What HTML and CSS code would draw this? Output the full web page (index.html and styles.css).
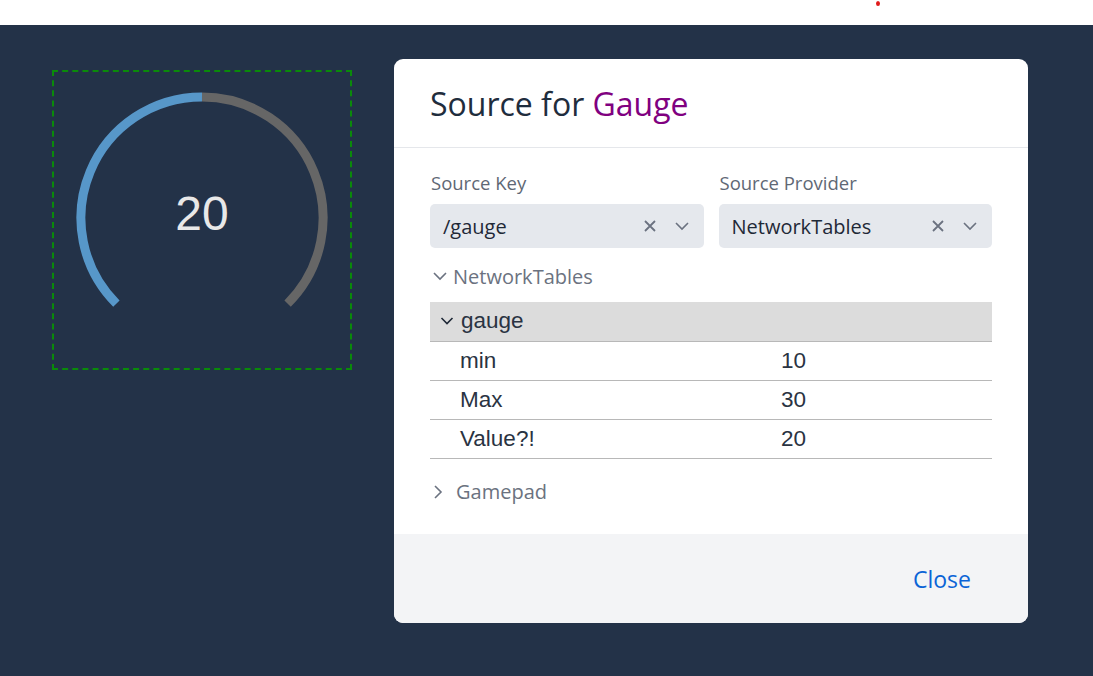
FILE: index.html
```html
<!DOCTYPE html>
<html>
<head>
<meta charset="utf-8">
<link rel="stylesheet" href="styles.css">
</head>
<body>
<div class="topbar"><span class="dot"></span></div>
<main class="canvas">
  <div class="widget">
    <svg class="gauge" width="300" height="300" viewBox="0 0 300 300">
      <path d="M 64.4 233.6 A 121 121 0 0 1 150 27" fill="none" stroke="#5797c9" stroke-width="9"/>
      <path d="M 150 27 A 121 121 0 0 1 235.6 233.6" fill="none" stroke="#666666" stroke-width="9"/>
    </svg>
    <div class="gauge-value">20</div>
  </div>
  <section class="modal">
    <header class="modal-head">
      <h1>Source for <span class="accent">Gauge</span></h1>
    </header>
    <div class="modal-body">
      <div class="fields">
        <div class="field">
          <label>Source Key</label>
          <div class="select">
            <span class="sel-text">/gauge</span>
            <svg class="ico-x" width="14" height="14" viewBox="0 0 14 14"><path d="M2 2L12 12M12 2L2 12" stroke="#6b7280" stroke-width="1.8" fill="none"/></svg>
            <svg class="ico-chev" width="16" height="10" viewBox="0 0 16 10"><path d="M2 2L8 8L14 2" stroke="#6b7280" stroke-width="1.6" fill="none"/></svg>
          </div>
        </div>
        <div class="field">
          <label>Source Provider</label>
          <div class="select">
            <span class="sel-text">NetworkTables</span>
            <svg class="ico-x" width="14" height="14" viewBox="0 0 14 14"><path d="M2 2L12 12M12 2L2 12" stroke="#6b7280" stroke-width="1.8" fill="none"/></svg>
            <svg class="ico-chev" width="16" height="10" viewBox="0 0 16 10"><path d="M2 2L8 8L14 2" stroke="#6b7280" stroke-width="1.6" fill="none"/></svg>
          </div>
        </div>
      </div>
      <div class="group">
        <svg class="gchev" width="16" height="12" viewBox="0 0 16 12"><path d="M2 3L8 9L14 3" stroke="#6b7280" stroke-width="1.6" fill="none"/></svg>
        <span>NetworkTables</span>
      </div>
      <table class="tree">
        <tr class="tree-head">
          <td colspan="2"><svg class="tchev" width="14" height="10" viewBox="0 0 14 10"><path d="M1.5 2L7 7.5L12.5 2" stroke="#1f2937" stroke-width="1.6" fill="none"/></svg>gauge</td>
        </tr>
        <tr><td class="k">min</td><td class="v">10</td></tr>
        <tr><td class="k">Max</td><td class="v">30</td></tr>
        <tr><td class="k">Value?!</td><td class="v">20</td></tr>
      </table>
      <div class="group group-closed">
        <svg class="gchev" width="12" height="16" viewBox="0 0 12 16"><path d="M3 2L9 8L3 14" stroke="#6b7280" stroke-width="1.6" fill="none"/></svg>
        <span>Gamepad</span>
      </div>
    </div>
    <footer class="modal-foot">
      <button class="close">Close</button>
    </footer>
  </section>
</main>
</body>
</html>
```
FILE: styles.css
```css
* { box-sizing: border-box; }
html, body { margin: 0; padding: 0; }
body {
  width: 1093px;
  height: 676px;
  overflow: hidden;
  background: #233248;
  font-family: "Open Sans", "Noto Sans", sans-serif;
}
.topbar {
  height: 25px;
  background: #ffffff;
  position: relative;
}
.dot {
  position: absolute;
  left: 876px;
  top: 1px;
  width: 4px;
  height: 5px;
  border-radius: 50%;
  background: #e01b1b;
}
.canvas {
  display: flex;
  align-items: flex-start;
  padding: 34px 0 0 52px;
  height: 651px;
}
.widget {
  position: relative;
  width: 300px;
  height: 300px;
  margin-top: 11px;
  border: 2px dashed #0a8a0a;
}
.gauge {
  position: absolute;
  left: -2px;
  top: -2px;
}
.gauge-value {
  position: absolute;
  left: 0;
  right: 0;
  top: 118px;
  text-align: center;
  font-family: "Liberation Sans", Arial, sans-serif;
  font-size: 48px;
  color: #e8e8e8;
  line-height: 1;
}
.modal {
  margin-left: 42px;
  width: 634px;
  height: 564px;
  background: #ffffff;
  border-radius: 9px;
  overflow: hidden;
  display: flex;
  flex-direction: column;
}
.modal-head {
  height: 89px;
  border-bottom: 1.5px solid #e5e7eb;
  padding: 24px 36px 0;
}
.modal-head h1 {
  margin: 0;
  font-weight: 500;
  font-size: 32px;
  line-height: 42px;
  color: #1f2d3d;
}
.accent { color: #800080; }
.modal-body {
  flex: 1;
  padding: 22px 36px 0;
}
.fields {
  display: flex;
  gap: 15px;
}
.field {
  flex: 1;
  display: flex;
  flex-direction: column;
}
.field label {
  font-size: 18.5px;
  line-height: 26px;
  color: #5f6875;
  padding-left: 1px;
  margin-bottom: 8px;
}
.select {
  height: 44px;
  background: #e5e8ed;
  border-radius: 5px;
  display: flex;
  align-items: center;
  padding: 0 14px 0 13px;
}
.sel-text {
  flex: 1;
  font-size: 20px;
  color: #1f2937;
}
.ico-x { margin-right: 17px; }
.group {
  display: flex;
  align-items: center;
  height: 30px;
  margin-top: 13px;
  font-size: 20px;
  color: #6b7280;
}
.group .gchev { margin: 0 5px 0 2px; }
.group-closed { margin-top: 18px; }
.group-closed .gchev { margin: 0 12px 0 2px; }
.tree {
  width: 100%;
  margin-top: 11px;
  border-collapse: collapse;
  font-family: "Liberation Sans", Arial, sans-serif;
  font-size: 22.5px;
  color: #2a3342;
}
.tree td {
  height: 39px;
  padding: 0;
  border-bottom: 1px solid #b8b8b8;
}
.tree-head td {
  background: #dcdcdc;
  padding-left: 10px;
  height: 39px;
}
.tchev { margin-right: 7px; vertical-align: 2px; }
.tree td.k { padding-left: 30px; width: 351px; }
.tree td.v { padding-left: 0; }
.modal-foot {
  height: 89px;
  background: #f3f4f6;
  display: flex;
  align-items: center;
  justify-content: flex-end;
  padding: 0 57px 0 0;
}
.close {
  border: none;
  background: none;
  font-family: "Open Sans", "Noto Sans", sans-serif;
  font-size: 23px;
  color: #0b64d6;
  padding: 0;
  cursor: pointer;
}
```
